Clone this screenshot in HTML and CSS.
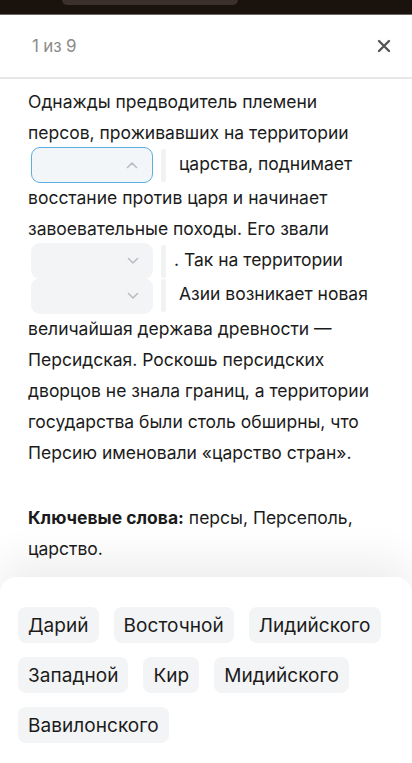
FILE: index.html
```html
<!DOCTYPE html>
<html lang="ru">
<head>
<meta charset="utf-8">
<link rel="stylesheet" href="styles.css">
</head>
<body>
<div class="screen">
  <div class="backdrop"><div class="backdrop-tab"></div></div>
  <div class="sheet">
    <header class="head">
      <span class="counter">1 из 9</span>
      <svg class="close" width="14" height="14" viewBox="0 0 14 14"><path d="M2 2L12 12M12 2L2 12" stroke="#555" stroke-width="2.4" stroke-linecap="round"/></svg>
    </header>
    <main class="content">
      <p class="text">Однажды предводитель племени персов, проживавших на территории <span class="slot"><span class="dd dd-open"><svg width="12" height="8" viewBox="0 0 12 8"><path d="M1.5 6.5L6 2L10.5 6.5" fill="none" stroke="#b9bdc2" stroke-width="1.6" stroke-linecap="round" stroke-linejoin="round"/></svg></span><span class="bar"></span></span> царства, поднимает восстание против царя и начинает завоевательные походы. Его звали <span class="slot"><span class="dd"><svg width="12" height="8" viewBox="0 0 12 8"><path d="M1.5 1.5L6 6L10.5 1.5" fill="none" stroke="#b9bdc2" stroke-width="1.6" stroke-linecap="round" stroke-linejoin="round"/></svg></span><span class="bar"></span></span>. Так на территории <span class="slot"><span class="dd"><svg width="12" height="8" viewBox="0 0 12 8"><path d="M1.5 1.5L6 6L10.5 1.5" fill="none" stroke="#b9bdc2" stroke-width="1.6" stroke-linecap="round" stroke-linejoin="round"/></svg></span><span class="bar"></span></span> Азии возникает новая величайшая держава древности — Персидская. Роскошь персидских дворцов не знала границ, а территории государства были столь обширны, что Персию именовали «царство стран».</p>
      <p class="keys"><span class="keys-label">Ключевые слова:</span> персы, Персеполь, царство.</p>
    </main>
    <section class="bank">
      <span class="chip">Дарий</span>
      <span class="chip">Восточной</span>
      <span class="chip">Лидийского</span>
      <span class="chip">Западной</span>
      <span class="chip">Кир</span>
      <span class="chip">Мидийского</span>
      <span class="chip">Вавилонского</span>
    </section>
  </div>
</div>
</body>
</html>
```
FILE: styles.css
```css
* { box-sizing: border-box; }
html, body { margin: 0; padding: 0; }
body { font-family: Inter, "Noto Sans", sans-serif; color: #1b1b1b; background: #fff; }
.screen { width: 412px; height: 763px; display: flex; flex-direction: column; overflow: hidden; }
.backdrop { height: 15px; background: #1a120d; flex: none; border-bottom: 1px solid #6e6660; }
.backdrop-tab { margin-left: 62px; width: 176px; height: 5px; background: #3b302b; border-radius: 0 0 12px 12px; }
.sheet { flex: 1; display: flex; flex-direction: column; min-height: 0; }
.head { height: 64px; flex: none; display: flex; align-items: center; justify-content: space-between; padding: 0 21px 0 32px; border-bottom: 2px solid #e7e7e7; }
.counter { font-size: 17px; color: #8c8c8c; letter-spacing: -0.2px; }
.close { display: block; }
.content { flex: 1; min-height: 0; padding: 7px 30px 0 28px; overflow: hidden; }
.text { margin: 0; font-size: 17.5px; line-height: 31px; letter-spacing: 0; }
.slot { display: inline-flex; align-items: center; gap: 8px; vertical-align: middle; margin: -1px 8px -1px 3px; }
.dd { display: inline-flex; align-items: center; justify-content: flex-end; width: 122px; height: 36px; background: #f3f4f6; border-radius: 9px; padding-right: 14px; }
.dd-open { border: 1.5px solid #5cb0e0; background: #f2f6f9; }
.bar { display: inline-block; width: 5px; height: 33px; background: #f1f2f3; border-radius: 2px; }
.keys { margin: 34px 0 0; font-size: 17.5px; line-height: 31px; letter-spacing: 0; }
.keys-label { font-weight: 700; }
.bank { flex: none; display: flex; flex-wrap: wrap; gap: 14px 15px; padding: 30px 20px 20px 18px; background: #fff; border-radius: 16px 16px 0 0; box-shadow: 0 -18px 40px rgba(0,0,0,0.07); position: relative; }
.chip { display: inline-flex; align-items: center; height: 36px; padding: 0 10px; background: #f3f4f5; border-radius: 8px; font-size: 19px; letter-spacing: 0.05px; color: #1b1b1b; }
```
